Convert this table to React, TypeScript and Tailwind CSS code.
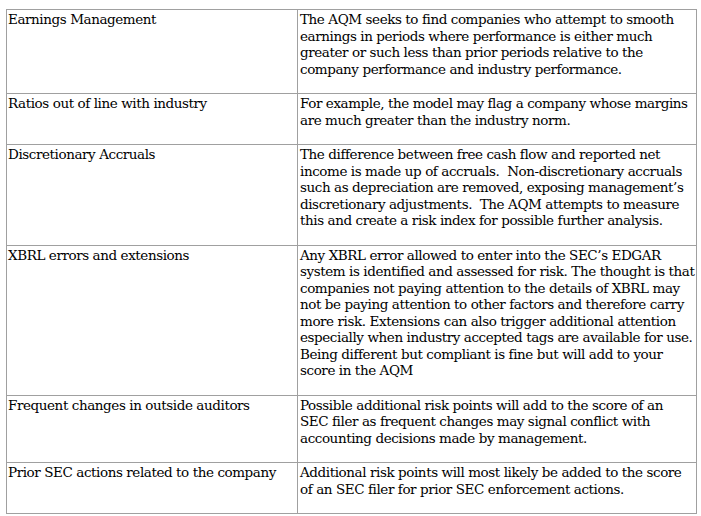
import React from "react";

const rows: { left: string; right: string[] }[] = [
  {
    left: "Earnings Management",
    right: [
      "The AQM seeks to find companies who attempt to smooth",
      "earnings in periods where performance is either much",
      "greater or such less than prior periods relative to the",
      "company performance and industry performance.",
    ],
  },
  {
    left: "Ratios out of line with industry",
    right: [
      "For example, the model may flag a company whose margins",
      "are much greater than the industry norm.",
    ],
  },
  {
    left: "Discretionary Accruals",
    right: [
      "The difference between free cash flow and reported net",
      "income is made up of accruals.\u00a0 Non-discretionary accruals",
      "such as depreciation are removed, exposing management\u2019s",
      "discretionary adjustments.\u00a0 The AQM attempts to measure",
      "this and create a risk index for possible further analysis.",
    ],
  },
  {
    left: "XBRL errors and extensions",
    right: [
      "Any XBRL error allowed to enter into the SEC\u2019s EDGAR",
      "system is identified and assessed for risk. The thought is that",
      "companies not paying attention to the details of XBRL may",
      "not be paying attention to other factors and therefore carry",
      "more risk. Extensions can also trigger additional attention",
      "especially when industry accepted tags are available for use.",
      "Being different but compliant is fine but will add to your",
      "score in the AQM",
    ],
  },
  {
    left: "Frequent changes in outside auditors",
    right: [
      "Possible additional risk points will add to the score of an",
      "SEC filer as frequent changes may signal conflict with",
      "accounting decisions made by management.",
    ],
  },
  {
    left: "Prior SEC actions related to the company",
    right: [
      "Additional risk points will most likely be added to the score",
      "of an SEC filer for prior SEC enforcement actions.",
    ],
  },
];

export default function App() {
  return (
    <div className="w-[701px] h-[516px] bg-white overflow-hidden pt-[9px] pl-[6px]">
      <div
        className="grid grid-cols-[291px_399px] w-[691px] border-t border-l border-[#a0a0a0] text-black text-[13.5px] leading-[16.5px] tracking-[-0.42px]"
        style={{ fontFamily: '"DejaVu Serif", "Liberation Serif", serif' }}
      >
        {rows.map((r, i) => (
          <React.Fragment key={i}>
            <div className="border-r border-b border-[#a0a0a0] pl-[1px] pt-[1px] pb-[16px] whitespace-nowrap">
              {r.left}
            </div>
            <div className="border-r border-b border-[#a0a0a0] pl-[2px] pt-[1px] pb-[16px] whitespace-nowrap">
              {r.right.map((line, j) => (
                <div key={j}>{line}</div>
              ))}
            </div>
          </React.Fragment>
        ))}
      </div>
    </div>
  );
}
